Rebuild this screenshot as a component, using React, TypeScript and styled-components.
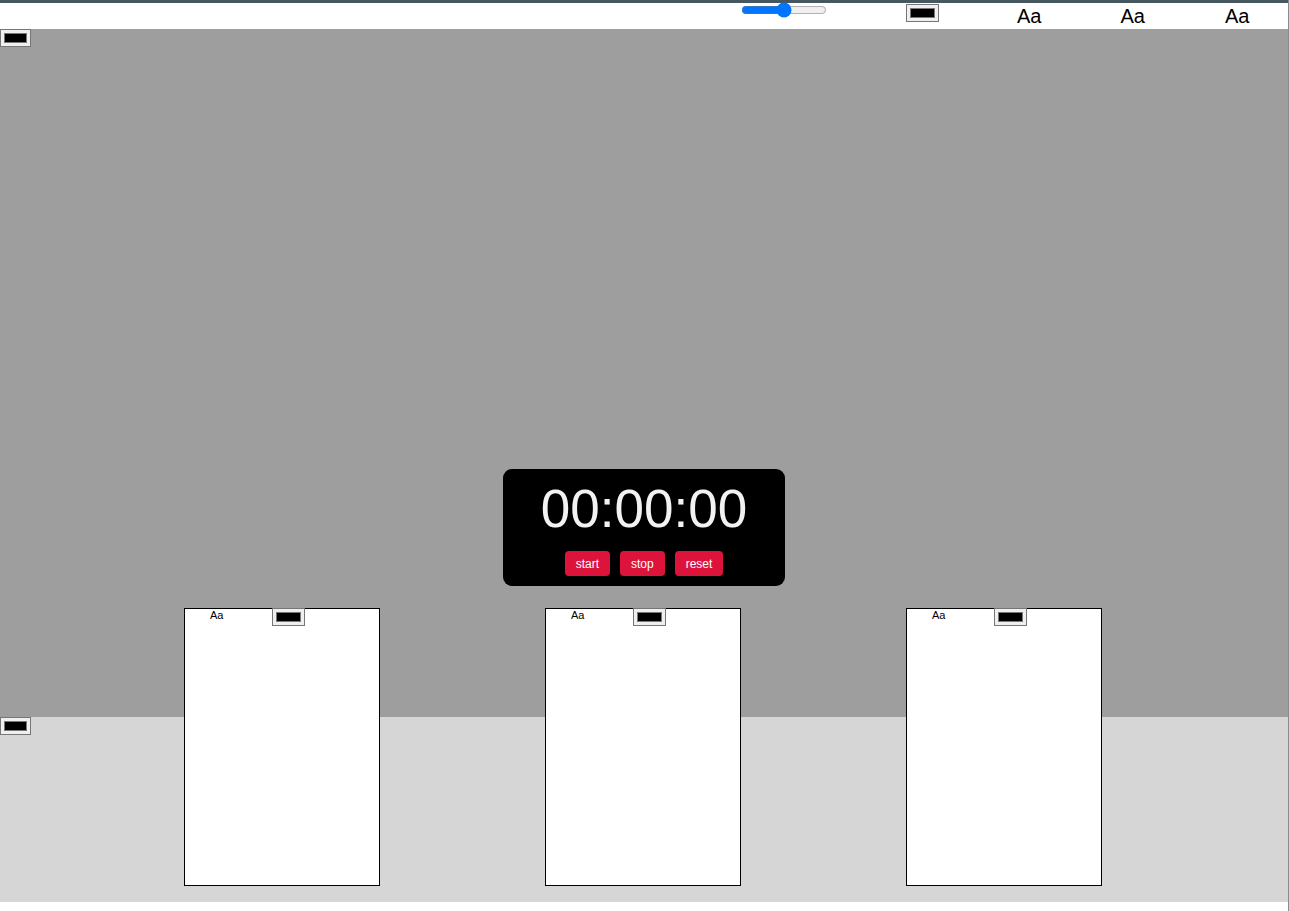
import React from "react";
import styled, { createGlobalStyle } from "styled-components";

const Global = createGlobalStyle`
  html, body { margin: 0; padding: 0; background: #ffffff; }
  body { font-family: "Liberation Sans", Arial, sans-serif; overflow: hidden; }
`;

const Page = styled.div`
  width: 1288px;
  height: 911px;
  border-right: 1px solid #8c8c8c;
  display: flex;
  flex-direction: column;
  background: #ffffff;
`;

const TopBar = styled.div`
  height: 3px;
  background: #46575f;
  flex: none;
`;

const Header = styled.div`
  height: 26px;
  display: flex;
  align-items: flex-start;
  background: #ffffff;
  flex: none;
`;

const Slider = styled.input`
  width: 86px;
  height: 10px;
  margin: 2px 0 0 741px;
  padding: 0;
  accent-color: #0075ff;
`;

const ColorPick = styled.input<{ $ml?: number; $mt?: number; $w?: number }>`
  width: ${(p) => p.$w ?? 33}px;
  height: 18px;
  margin: ${(p) => p.$mt ?? 0}px 0 0 ${(p) => p.$ml ?? 0}px;
  padding: 1px 2px;
  border: 1px solid #767676;
  background: #efefef;
  box-sizing: border-box;
  flex: none;
  &::-webkit-color-swatch-wrapper { padding: 2px 1px; }
  &::-webkit-color-swatch { border: 1px solid #777777; }
`;

const Aa = styled.span<{ $ml: number }>`
  margin-left: ${(p) => p.$ml}px;
  font-size: 20px;
  line-height: 24px;
  margin-top: 1px;
  color: #000;
`;

const Scene = styled.div`
  position: relative;
  display: flex;
  flex-direction: column;
  flex: none;
`;

const Stage = styled.div`
  height: 688px;
  background: #9e9e9e;
  display: flex;
  flex-direction: column;
  align-items: flex-start;
`;

const Timer = styled.div`
  align-self: center;
  margin-top: 422px;
  width: 282px;
  height: 117px;
  box-sizing: border-box;
  background: #000;
  border-radius: 9px;
  display: flex;
  flex-direction: column;
  align-items: center;
  padding-top: 7px;
`;

const Digits = styled.div`
  color: #f2f2f2;
  font-size: 53px;
  line-height: 66px;
`;

const Buttons = styled.div`
  display: flex;
  gap: 10px;
  margin-top: 9px;
`;

const Btn = styled.button`
  background: #dc143c;
  color: #ffffff;
  border: none;
  border-radius: 4px;
  height: 25px;
  padding: 0 11px;
  font-family: "Liberation Sans", Arial, sans-serif;
  font-size: 12px;
  cursor: pointer;
`;

const Floor = styled.div`
  height: 185px;
  background: #d6d6d6;
  display: flex;
  align-items: flex-start;
`;

const CardRow = styled.div`
  position: absolute;
  left: 0;
  right: 0;
  bottom: 16px;
  display: flex;
  padding-left: 184px;
  gap: 165px;
`;

const Card = styled.div`
  width: 196px;
  height: 278px;
  box-sizing: border-box;
  background: #ffffff;
  border: 1px solid #000;
`;

const CardHead = styled.div`
  display: flex;
  align-items: flex-start;
  margin-top: -1px;
`;

const SmallAa = styled.span`
  font-size: 11px;
  line-height: 13px;
  margin: 1px 0 0 25px;
  color: #000;
`;

export default function App() {
  return (
    <>
      <Global />
      <Page>
        <TopBar />
        <Header>
          <Slider type="range" min={0} max={100} defaultValue={50} />
          <ColorPick type="color" defaultValue="#000000" $ml={79} $mt={1} />
          <Aa $ml={78}>Aa</Aa>
          <Aa $ml={79}>Aa</Aa>
          <Aa $ml={80}>Aa</Aa>
        </Header>
        <Scene>
          <Stage>
            <ColorPick type="color" defaultValue="#000000" $w={31} />
            <Timer>
              <Digits>00:00:00</Digits>
              <Buttons>
                <Btn>start</Btn>
                <Btn>stop</Btn>
                <Btn>reset</Btn>
              </Buttons>
            </Timer>
          </Stage>
          <Floor>
            <ColorPick type="color" defaultValue="#000000" $w={31} />
          </Floor>
          <CardRow>
            {[0, 1, 2].map((i) => (
              <Card key={i}>
                <CardHead>
                  <SmallAa>Aa</SmallAa>
                  <ColorPick type="color" defaultValue="#000000" $ml={49} />
                </CardHead>
              </Card>
            ))}
          </CardRow>
        </Scene>
      </Page>
    </>
  );
}
